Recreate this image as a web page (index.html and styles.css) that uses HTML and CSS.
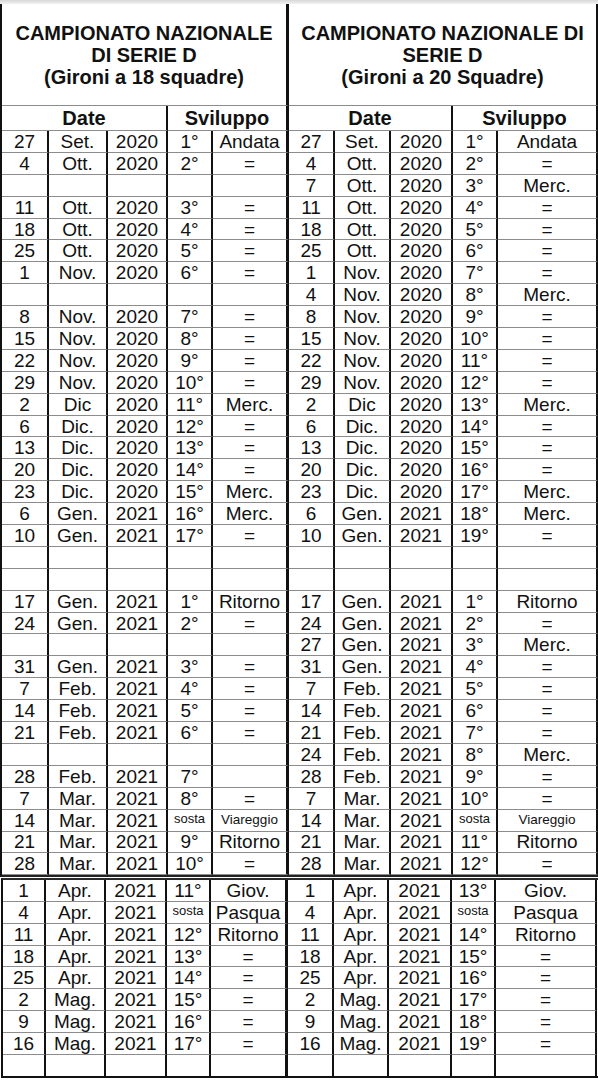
FILE: index.html
```html
<!DOCTYPE html>
<html lang="it">
<head>
<meta charset="utf-8">
<title>Campionato Nazionale di Serie D</title>
<link rel="stylesheet" href="styles.css">
</head>
<body>
<div class="topband"></div>
<div class="sheet upper">
  <div class="row title">
    <span class="sep">CAMPIONATO NAZIONALE<br>DI SERIE D<br>(Gironi a 18 squadre)</span>
    <span>CAMPIONATO NAZIONALE DI<br>SERIE D<br>(Gironi a 20 Squadre)</span>
  </div>
  <div class="row head">
    <span class="c3">Date</span><span class="c2 sep">Sviluppo</span><span class="c3">Date</span><span class="c2">Sviluppo</span>
  </div>
  <div class="row data"><span>27</span><span>Set.</span><span>2020</span><span>1°</span><span>Andata</span><span>27</span><span>Set.</span><span>2020</span><span>1°</span><span>Andata</span></div>
  <div class="row data"><span>4</span><span>Ott.</span><span>2020</span><span>2°</span><span>=</span><span>4</span><span>Ott.</span><span>2020</span><span>2°</span><span>=</span></div>
  <div class="row data"><span></span><span></span><span></span><span></span><span></span><span>7</span><span>Ott.</span><span>2020</span><span>3°</span><span>Merc.</span></div>
  <div class="row data"><span>11</span><span>Ott.</span><span>2020</span><span>3°</span><span>=</span><span>11</span><span>Ott.</span><span>2020</span><span>4°</span><span>=</span></div>
  <div class="row data"><span>18</span><span>Ott.</span><span>2020</span><span>4°</span><span>=</span><span>18</span><span>Ott.</span><span>2020</span><span>5°</span><span>=</span></div>
  <div class="row data"><span>25</span><span>Ott.</span><span>2020</span><span>5°</span><span>=</span><span>25</span><span>Ott.</span><span>2020</span><span>6°</span><span>=</span></div>
  <div class="row data"><span>1</span><span>Nov.</span><span>2020</span><span>6°</span><span>=</span><span>1</span><span>Nov.</span><span>2020</span><span>7°</span><span>=</span></div>
  <div class="row data"><span></span><span></span><span></span><span></span><span></span><span>4</span><span>Nov.</span><span>2020</span><span>8°</span><span>Merc.</span></div>
  <div class="row data"><span>8</span><span>Nov.</span><span>2020</span><span>7°</span><span>=</span><span>8</span><span>Nov.</span><span>2020</span><span>9°</span><span>=</span></div>
  <div class="row data"><span>15</span><span>Nov.</span><span>2020</span><span>8°</span><span>=</span><span>15</span><span>Nov.</span><span>2020</span><span>10°</span><span>=</span></div>
  <div class="row data"><span>22</span><span>Nov.</span><span>2020</span><span>9°</span><span>=</span><span>22</span><span>Nov.</span><span>2020</span><span>11°</span><span>=</span></div>
  <div class="row data"><span>29</span><span>Nov.</span><span>2020</span><span>10°</span><span>=</span><span>29</span><span>Nov.</span><span>2020</span><span>12°</span><span>=</span></div>
  <div class="row data"><span>2</span><span>Dic</span><span>2020</span><span>11°</span><span>Merc.</span><span>2</span><span>Dic</span><span>2020</span><span>13°</span><span>Merc.</span></div>
  <div class="row data"><span>6</span><span>Dic.</span><span>2020</span><span>12°</span><span>=</span><span>6</span><span>Dic.</span><span>2020</span><span>14°</span><span>=</span></div>
  <div class="row data"><span>13</span><span>Dic.</span><span>2020</span><span>13°</span><span>=</span><span>13</span><span>Dic.</span><span>2020</span><span>15°</span><span>=</span></div>
  <div class="row data"><span>20</span><span>Dic.</span><span>2020</span><span>14°</span><span>=</span><span>20</span><span>Dic.</span><span>2020</span><span>16°</span><span>=</span></div>
  <div class="row data"><span>23</span><span>Dic.</span><span>2020</span><span>15°</span><span>Merc.</span><span>23</span><span>Dic.</span><span>2020</span><span>17°</span><span>Merc.</span></div>
  <div class="row data"><span>6</span><span>Gen.</span><span>2021</span><span>16°</span><span>Merc.</span><span>6</span><span>Gen.</span><span>2021</span><span>18°</span><span>Merc.</span></div>
  <div class="row data"><span>10</span><span>Gen.</span><span>2021</span><span>17°</span><span>=</span><span>10</span><span>Gen.</span><span>2021</span><span>19°</span><span>=</span></div>
  <div class="row data"><span></span><span></span><span></span><span></span><span></span><span></span><span></span><span></span><span></span><span></span></div>
  <div class="row data"><span></span><span></span><span></span><span></span><span></span><span></span><span></span><span></span><span></span><span></span></div>
  <div class="row data"><span>17</span><span>Gen.</span><span>2021</span><span>1°</span><span>Ritorno</span><span>17</span><span>Gen.</span><span>2021</span><span>1°</span><span>Ritorno</span></div>
  <div class="row data"><span>24</span><span>Gen.</span><span>2021</span><span>2°</span><span>=</span><span>24</span><span>Gen.</span><span>2021</span><span>2°</span><span>=</span></div>
  <div class="row data"><span></span><span></span><span></span><span></span><span></span><span>27</span><span>Gen.</span><span>2021</span><span>3°</span><span>Merc.</span></div>
  <div class="row data"><span>31</span><span>Gen.</span><span>2021</span><span>3°</span><span>=</span><span>31</span><span>Gen.</span><span>2021</span><span>4°</span><span>=</span></div>
  <div class="row data"><span>7</span><span>Feb.</span><span>2021</span><span>4°</span><span>=</span><span>7</span><span>Feb.</span><span>2021</span><span>5°</span><span>=</span></div>
  <div class="row data"><span>14</span><span>Feb.</span><span>2021</span><span>5°</span><span>=</span><span>14</span><span>Feb.</span><span>2021</span><span>6°</span><span>=</span></div>
  <div class="row data"><span>21</span><span>Feb.</span><span>2021</span><span>6°</span><span>=</span><span>21</span><span>Feb.</span><span>2021</span><span>7°</span><span>=</span></div>
  <div class="row data"><span></span><span></span><span></span><span></span><span></span><span>24</span><span>Feb.</span><span>2021</span><span>8°</span><span>Merc.</span></div>
  <div class="row data"><span>28</span><span>Feb.</span><span>2021</span><span>7°</span><span></span><span>28</span><span>Feb.</span><span>2021</span><span>9°</span><span>=</span></div>
  <div class="row data"><span>7</span><span>Mar.</span><span>2021</span><span>8°</span><span>=</span><span>7</span><span>Mar.</span><span>2021</span><span>10°</span><span>=</span></div>
  <div class="row data"><span>14</span><span>Mar.</span><span>2021</span><span class="sm">sosta</span><span class="vi">Viareggio</span><span>14</span><span>Mar.</span><span>2021</span><span class="sm">sosta</span><span class="vi">Viareggio</span></div>
  <div class="row data"><span>21</span><span>Mar.</span><span>2021</span><span>9°</span><span>Ritorno</span><span>21</span><span>Mar.</span><span>2021</span><span>11°</span><span>Ritorno</span></div>
  <div class="row data"><span>28</span><span>Mar.</span><span>2021</span><span>10°</span><span>=</span><span>28</span><span>Mar.</span><span>2021</span><span>12°</span><span>=</span></div>
</div>
<div class="sheet lower">
  <div class="row data"><span>1</span><span>Apr.</span><span>2021</span><span>11°</span><span>Giov.</span><span>1</span><span>Apr.</span><span>2021</span><span>13°</span><span>Giov.</span></div>
  <div class="row data"><span>4</span><span>Apr.</span><span>2021</span><span class="sm">sosta</span><span>Pasqua</span><span>4</span><span>Apr.</span><span>2021</span><span class="sm">sosta</span><span>Pasqua</span></div>
  <div class="row data"><span>11</span><span>Apr.</span><span>2021</span><span>12°</span><span>Ritorno</span><span>11</span><span>Apr.</span><span>2021</span><span>14°</span><span>Ritorno</span></div>
  <div class="row data"><span>18</span><span>Apr.</span><span>2021</span><span>13°</span><span>=</span><span>18</span><span>Apr.</span><span>2021</span><span>15°</span><span>=</span></div>
  <div class="row data"><span>25</span><span>Apr.</span><span>2021</span><span>14°</span><span>=</span><span>25</span><span>Apr.</span><span>2021</span><span>16°</span><span>=</span></div>
  <div class="row data"><span>2</span><span>Mag.</span><span>2021</span><span>15°</span><span>=</span><span>2</span><span>Mag.</span><span>2021</span><span>17°</span><span>=</span></div>
  <div class="row data"><span>9</span><span>Mag.</span><span>2021</span><span>16°</span><span>=</span><span>9</span><span>Mag.</span><span>2021</span><span>18°</span><span>=</span></div>
  <div class="row data"><span>16</span><span>Mag.</span><span>2021</span><span>17°</span><span>=</span><span>16</span><span>Mag.</span><span>2021</span><span>19°</span><span>=</span></div>
  <div class="row data last"><span></span><span></span><span></span><span></span><span></span><span></span><span></span><span></span><span></span><span></span></div>
</div>
</body>
</html>
```

FILE: styles.css
```css
* {
  box-sizing: border-box;
}

html, body {
  margin: 0;
  padding: 0;
  background: #ffffff;
}

body {
  width: 598px;
  font-family: "Liberation Sans", Arial, sans-serif;
  color: #111111;
}

.topband {
  height: 4px;
  background: linear-gradient(#d6d6d6, #f3f3f3);
}

.sheet {
  border-left: 2px solid #111111;
}

.sheet.upper {
  border-bottom: 2px solid #222222;
}

.sheet.upper .row {
  display: grid;
  grid-template-columns: 47px 59px 60px 45px 76px 46px 56px 62px 45px 100px;
  height: 21.9px;
}

.sheet.lower {
  margin-left: 1px;
  margin-top: 1px;
  border-top: 2px solid #2a2a2a;
  border-bottom: 2px solid #111111;
}

.sheet.lower .row {
  display: grid;
  grid-template-columns: 43px 60px 61px 44px 77px 46px 55px 63px 44px 101px;
  height: 21.8px;
}

.row > span {
  display: flex;
  align-items: center;
  justify-content: center;
  border-right: 2px solid #111111;
  border-bottom: 1px solid #8c8c8c;
  font-size: 19px;
  line-height: 1;
  white-space: nowrap;
}

.row.data > span:nth-child(5),
.row > span.sep {
  border-right-width: 3px;
}

.row.last > span {
  border-bottom: none;
}

.sheet.upper .row.title {
  height: 102px;
}

.row.title > span {
  grid-column: span 5;
  font-weight: bold;
  font-size: 20px;
  line-height: 22px;
  text-align: center;
}

.sheet.upper .row.head {
  height: 25px;
}

.row.head > span {
  font-weight: bold;
  font-size: 20px;
}

.row.head > span.c3 {
  grid-column: span 3;
}

.row.head > span.c2 {
  grid-column: span 2;
}

.row > span.sm {
  font-size: 13px;
  padding-bottom: 3px;
}

.row > span.vi {
  font-size: 13.5px;
}
```
